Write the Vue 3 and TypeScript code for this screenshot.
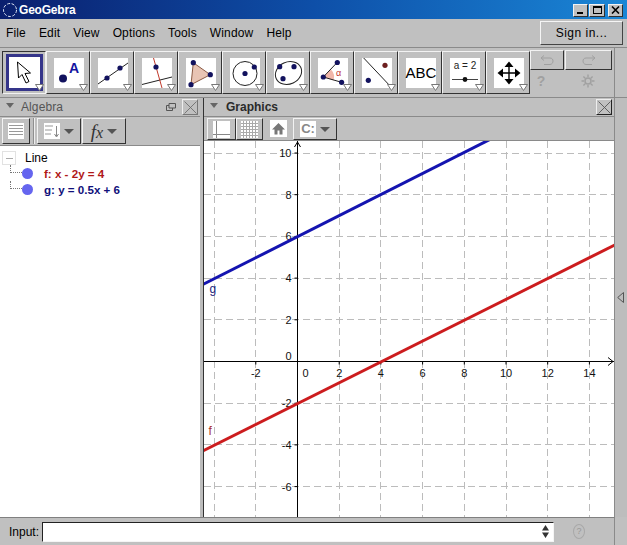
<script setup lang="ts">
// Menu and toolbar data
const menus = ['File', 'Edit', 'View', 'Options', 'Tools', 'Window', 'Help'];
const tools = ['move', 'point', 'line', 'perp', 'poly', 'circle', 'conic', 'angle', 'reflect', 'text', 'slider', 'pan'];

// Graphics view coordinate system
const W = 410;
const H = 376;
const originX = 93.5;
const originY = 220.5;
const unit = 20.85;
const sx = (x: number) => originX + x * unit;
const sy = (y: number) => originY - y * unit;

// Grid lines sit on whole pixels so the dashes stay crisp
const gridXs = [-4, -2, 2, 4, 6, 8, 10, 12, 14].map(v => Math.floor(sx(v)) + 0.5);
const gridYs = [10, 8, 6, 4, 2, -2, -4, -6].map(v => Math.floor(sy(v)) + 0.5);
const xLabels = [-2, 2, 4, 6, 8, 10, 12, 14];
const yLabels = [10, 8, 6, 4, 2, -2, -4, -6];
</script>

<template>
  <div class="window">
    <div class="titlebar">
      <svg class="app-icon" width="16" height="16" viewBox="0 0 16 16">
        <circle cx="8" cy="8" r="6.5" fill="none" stroke="#dfe6f5" stroke-width="1" stroke-dasharray="3 1.5" />
      </svg>
      <span class="title">GeoGebra</span>
      <div class="win-buttons">
        <button class="win-btn"><span class="min-bar"></span></button>
        <button class="win-btn max-btn"><span class="max-box"></span></button>
        <button class="win-btn close-btn">
          <svg width="9" height="8" viewBox="0 0 9 8"><path d="M1 0.5L8 7.5M8 0.5L1 7.5" stroke="#000" stroke-width="1.6" /></svg>
        </button>
      </div>
    </div>

    <div class="menubar">
      <span v-for="m in menus" :key="m" class="menu-item">{{ m }}</span>
      <button class="sign-in">Sign in...</button>
    </div>

    <div class="toolbar">
      <div class="tools">
        <div v-for="(t, i) in tools" :key="t" class="tool" :class="{ selected: i === 0 }">
          <div class="tool-face">
            <svg v-if="t === 'move'" width="30" height="30" viewBox="0 0 30 30">
              <path d="M8.5 4L9.5 20L13 16.5L17 25L20 23.5L16 15.5L21.5 15Z" fill="#fff" stroke="#000" stroke-width="1" />
            </svg>
            <svg v-else-if="t === 'point'" width="30" height="30" viewBox="0 0 30 30">
              <circle cx="9" cy="20.5" r="4" fill="#12125e" />
              <text x="15" y="14.5" class="tool-a">A</text>
            </svg>
            <svg v-else-if="t === 'line'" width="30" height="30" viewBox="0 0 30 30">
              <path d="M0 26L30 5" stroke="#222" stroke-width="1" />
              <circle cx="9" cy="20" r="2.6" fill="#12125e" />
              <circle cx="22" cy="10" r="2.6" fill="#12125e" />
            </svg>
            <svg v-else-if="t === 'perp'" width="30" height="30" viewBox="0 0 30 30">
              <path d="M0 26.5L30 19" stroke="#222" stroke-width="1" />
              <path d="M11.5 0L20 30" stroke="#c0392b" stroke-width="1" />
              <circle cx="14" cy="9" r="2.6" fill="#12125e" />
            </svg>
            <svg v-else-if="t === 'poly'" width="30" height="30" viewBox="0 0 30 30">
              <path d="M7.3 4.7L24.3 16.7L5 26.7Z" fill="#e8c4b4" stroke="#8a5a44" stroke-width="1" />
              <circle cx="7.3" cy="4.7" r="2.6" fill="#12125e" />
              <circle cx="24.3" cy="16.7" r="2.6" fill="#12125e" />
              <circle cx="5" cy="26.7" r="2.6" fill="#12125e" />
            </svg>
            <svg v-else-if="t === 'circle'" width="30" height="30" viewBox="0 0 30 30">
              <circle cx="15" cy="15.5" r="12" fill="none" stroke="#222" stroke-width="1" />
              <circle cx="15" cy="15.5" r="2.6" fill="#12125e" />
              <circle cx="24.3" cy="9" r="2.6" fill="#12125e" />
            </svg>
            <svg v-else-if="t === 'conic'" width="30" height="30" viewBox="0 0 30 30">
              <ellipse cx="14.5" cy="15" rx="13.5" ry="11" transform="rotate(-25 14.5 15)" fill="none" stroke="#222" stroke-width="1" />
              <circle cx="5.7" cy="8.7" r="2.6" fill="#12125e" />
              <circle cx="20" cy="8.7" r="2.6" fill="#12125e" />
              <circle cx="9" cy="20.7" r="2.6" fill="#12125e" />
            </svg>
            <svg v-else-if="t === 'angle'" width="30" height="30" viewBox="0 0 30 30">
              <path d="M5.3 19L13 11.5A11 11 0 0 1 15.5 22.5Z" fill="#f1b7a9" />
              <path d="M5.3 19L19.3 4.3M5.3 19L23.6 24.3" stroke="#222" stroke-width="1" />
              <circle cx="5.3" cy="19" r="2.6" fill="#12125e" />
              <circle cx="19.3" cy="4.5" r="2.6" fill="#12125e" />
              <circle cx="23.6" cy="24.3" r="2.6" fill="#12125e" />
              <text x="18" y="18" class="tool-alpha">α</text>
            </svg>
            <svg v-else-if="t === 'reflect'" width="30" height="30" viewBox="0 0 30 30">
              <path d="M1.7 0L30 30" stroke="#222" stroke-width="1" />
              <circle cx="23" cy="7.3" r="2.6" fill="#6d1f1f" />
              <circle cx="6.3" cy="22.3" r="2.6" fill="#12125e" />
            </svg>
            <span v-else-if="t === 'text'" class="tool-abc">ABC</span>
            <svg v-else-if="t === 'slider'" width="30" height="30" viewBox="0 0 30 30">
              <text x="15" y="11" class="tool-slider">a = 2</text>
              <path d="M2 21.5H28" stroke="#444" stroke-width="1" />
              <circle cx="15" cy="21.5" r="2.4" fill="#111" />
            </svg>
            <svg v-else width="30" height="30" viewBox="0 0 30 30">
              <path d="M15 8V22M8 15H22" stroke="#000" stroke-width="1.4" />
              <path d="M15 3.5L19.5 9H10.5ZM15 26.5L19.5 21H10.5ZM3.5 15L9 10.5V19.5ZM26.5 15L21 10.5V19.5Z" fill="#000" />
            </svg>
          </div>
          <svg class="tool-arrow" width="9" height="7" viewBox="0 0 9 7">
            <path d="M0.5 0.5H8.5L4.5 6.5Z" fill="#fff" stroke="#777" stroke-width="1" />
          </svg>
        </div>
      </div>
      <div class="undo-panel">
        <div class="undo-row">
          <button class="undo-btn">
            <svg width="14" height="11" viewBox="0 0 14 11"><path d="M4 0.5L1 3L4 5.5M1.5 3H10C12 3 13 4.5 13 6S12 9.5 10 9.5H4" fill="none" stroke="#a0a0a0" stroke-width="1" /></svg>
          </button>
          <button class="undo-btn wide">
            <svg width="14" height="11" viewBox="0 0 14 11"><path d="M10 0.5L13 3L10 5.5M12.5 3H4C2 3 1 4.5 1 6S2 9.5 4 9.5H10" fill="none" stroke="#a0a0a0" stroke-width="1" /></svg>
          </button>
        </div>
        <div class="help-row">
          <span class="help-q">?</span>
          <svg class="gear" width="14" height="14" viewBox="0 0 14 14">
            <circle cx="7" cy="7" r="3" fill="none" stroke="#a0a0a0" stroke-width="1.5" />
            <path d="M7 0.5V3M7 11V13.5M0.5 7H3M11 7H13.5M2.4 2.4L4.2 4.2M9.8 9.8L11.6 11.6M11.6 2.4L9.8 4.2M4.2 9.8L2.4 11.6" stroke="#a0a0a0" stroke-width="1.4" />
          </svg>
        </div>
      </div>
    </div>

    <div class="workspace">
      <div class="algebra">
        <div class="panel-title">
          <span class="collapse"></span>
          <span class="panel-name">Algebra</span>
          <svg class="undock" width="10" height="8" viewBox="0 0 10 8"><path d="M3 0.5H9.5V5H3ZM0.5 2.5H3M0.5 2.5V7.5H6.5V5" fill="none" stroke="#555" stroke-width="1" /></svg>
          <button class="panel-close">
            <svg width="13" height="13" viewBox="0 0 13 13"><path d="M0.5 0.5L12.5 12.5M12.5 0.5L0.5 12.5" stroke="#666" stroke-width="0.8" /></svg>
          </button>
        </div>
        <div class="panel-tools algebra-tools">
          <button class="style-btn sm">
            <span class="btn-icon lines"><i></i><i></i><i></i><i></i></span>
          </button>
          <span class="sep"></span>
          <button class="style-btn md">
            <span class="btn-icon sort">
              <svg width="16" height="16" viewBox="0 0 16 16"><path d="M1 3H9M1 7H8M1 11H7" stroke="#999" stroke-width="1" /><path d="M12.5 3V13M10.5 11L12.5 14L14.5 11" fill="none" stroke="#888" stroke-width="1" /></svg>
            </span>
            <span class="caret"></span>
          </button>
          <button class="style-btn md fx-btn">
            <span class="fx">f<span class="fx-x">x</span></span>
            <span class="caret"></span>
          </button>
        </div>
        <div class="tree">
          <div class="tree-head">
            <span class="minus-box"><span></span></span>
            <span class="tree-title">Line</span>
          </div>
          <div class="tree-row">
            <span class="connector"></span>
            <span class="dot"></span>
            <span class="eq red">f: x - 2y = 4</span>
          </div>
          <div class="tree-row">
            <span class="connector"></span>
            <span class="dot"></span>
            <span class="eq blue">g: y = 0.5x + 6</span>
          </div>
        </div>
      </div>

      <div class="divider"></div>

      <div class="graphics-panel">
        <div class="panel-title">
          <span class="collapse"></span>
          <span class="panel-name bold">Graphics</span>
          <button class="panel-close dark">
            <svg width="13" height="13" viewBox="0 0 13 13"><path d="M0.5 0.5L12.5 12.5M12.5 0.5L0.5 12.5" stroke="#555" stroke-width="0.9" /></svg>
          </button>
        </div>
        <div class="panel-tools graphics-tools">
          <button class="style-btn gsm">
            <svg width="17" height="17" viewBox="0 0 17 17"><rect width="17" height="17" fill="#fff" /><path d="M3.5 0V13.5H17M0 13.5H3.5M3.5 13.5V17" fill="none" stroke="#888" stroke-width="1" /></svg>
          </button>
          <button class="style-btn gsm narrow">
            <svg width="17" height="17" viewBox="0 0 17 17"><rect width="17" height="17" fill="#fff" /><path d="M2.5 0V17M5.5 0V17M8.5 0V17M11.5 0V17M14.5 0V17M0 2.5H17M0 5.5H17M0 8.5H17M0 11.5H17M0 14.5H17" stroke="#aaa" stroke-width="1" /></svg>
          </button>
          <span class="home-icon">
            <svg width="17" height="17" viewBox="0 0 17 17"><path d="M8.5 3L2 9.5H4.5V14.5H7.5V10.5H9.5V14.5H12.5V9.5H15Z" fill="#777" /></svg>
          </span>
          <button class="style-btn gmd">
            <span class="c-icon">C:</span>
            <span class="caret"></span>
          </button>
        </div>
        <div class="canvas">
          <svg :width="W" :height="H" :viewBox="`0 0 ${W} ${H}`">
            <g stroke="#bcbcbc" stroke-width="1" stroke-dasharray="7 4">
              <line v-for="x in gridXs" :key="'gx' + x" :x1="x" y1="0" :x2="x" :y2="H" />
              <line v-for="y in gridYs" :key="'gy' + y" x1="0" :y1="y" :x2="W" :y2="y" />
            </g>
            <line :x1="originX" y1="0" :x2="originX" :y2="H" stroke="#000" stroke-width="1" />
            <line x1="0" :y1="originY" :x2="W" :y2="originY" stroke="#000" stroke-width="1" />
            <path :d="`M${originX - 3} 6L${originX} 1L${originX + 3} 6`" fill="none" stroke="#000" stroke-width="1" />
            <path :d="`M${W - 6} ${originY - 4}L${W - 1} ${originY}L${W - 6} ${originY + 4}`" fill="none" stroke="#000" stroke-width="1" />
            <g v-for="x in xLabels" :key="'lx' + x">
              <line :x1="sx(x)" :y1="originY" :x2="sx(x)" :y2="originY + 3" stroke="#000" />
              <text :x="sx(x)" :y="originY + 15" text-anchor="middle" class="axis-label">{{ x }}</text>
            </g>
            <g v-for="y in yLabels" :key="'ly' + y">
              <line :x1="originX - 3" :y1="sy(y)" :x2="originX" :y2="sy(y)" stroke="#000" />
              <text :x="originX - 6" :y="sy(y) + 4" text-anchor="end" class="axis-label">{{ y }}</text>
            </g>
            <text :x="originX - 6" :y="originY - 2" text-anchor="end" class="axis-label">0</text>
            <text :x="originX + 5" :y="originY + 15" class="axis-label">0</text>
            <line :x1="sx(-5)" :y1="sy(-4.52)" :x2="sx(16)" :y2="sy(5.98)" stroke="#cc1c1e" stroke-width="3" />
            <line :x1="sx(-5)" :y1="sy(3.46)" :x2="sx(10)" :y2="sy(11.04)" stroke="#1414b0" stroke-width="3" />
            <text x="5.5" y="152" class="line-label g">g</text>
            <text x="4.5" y="294" class="line-label f">f</text>
          </svg>
        </div>
      </div>
      <div class="side-strip">
        <svg class="side-arrow" width="7" height="11" viewBox="0 0 7 11"><path d="M6.5 0.5V10.5L0.7 5.5Z" fill="none" stroke="#555" stroke-width="1" /></svg>
      </div>
    </div>

    <div class="inputbar">
      <span class="input-label">Input:</span>
      <div class="input-box">
        <svg width="7" height="13" viewBox="0 0 7 13"><path d="M3.5 0L7 5.5H0ZM3.5 13L0 7.5H7Z" fill="#333" /></svg>
      </div>
      <span class="input-help">?</span>
    </div>
  </div>
</template>

<style>
html, body {
  margin: 0;
  padding: 0;
  background: #c0c0c0;
}
</style>

<style scoped>
.window {
  width: 627px;
  height: 545px;
  display: flex;
  flex-direction: column;
  overflow: hidden;
  background: #c0c0c0;
  font-family: "Liberation Sans", Arial, sans-serif;
  font-size: 12px;
  color: #000;
}

button {
  padding: 0;
  font-family: inherit;
  color: inherit;
  background: #c0c0c0;
  border: 0;
}

.titlebar {
  height: 19px;
  flex: none;
  display: flex;
  align-items: center;
  padding: 0 4px 0 2px;
  background: linear-gradient(90deg, #0a1f6e 0%, #0e4fa8 50%, #1a86d6 100%);
  color: #fff;
}
.app-icon { margin-right: 1px; }
.title { font-weight: 700; font-size: 12px; letter-spacing: -0.2px; }
.win-buttons { margin-left: auto; display: flex; margin-top: 1px; }
.win-btn {
  width: 15px;
  height: 13px;
  box-sizing: border-box;
  display: flex;
  align-items: center;
  justify-content: center;
  border: 1px solid;
  border-color: #f2f2f2 #303030 #303030 #f2f2f2;
}
.max-btn { width: 16px; margin-left: 1px; }
.close-btn { margin-left: 3px; }
.min-bar { width: 6px; height: 2px; background: #000; margin-top: 6px; margin-right: 2px; }
.max-box { width: 9px; height: 8px; border: 1px solid #000; border-top-width: 2px; box-sizing: border-box; }

.menubar {
  height: 29px;
  flex: none;
  display: flex;
  align-items: center;
  padding-left: 6px;
  gap: 13px;
  box-sizing: border-box;
  border-bottom: 1px solid #8a8a8a;
  font-size: 12px;
  letter-spacing: 0.15px;
}
.sign-in {
  margin-left: auto;
  width: 83px;
  height: 24px;
  margin-right: 4px;
  font-size: 12px;
  letter-spacing: 0.5px;
  box-sizing: border-box;
  border: 1px solid;
  border-color: #f5f5f5 #444 #444 #f5f5f5;
}

.toolbar {
  height: 50px;
  flex: none;
  display: flex;
  padding-left: 2px;
  padding-top: 3px;
  box-sizing: border-box;
  border-bottom: 1px solid #8a8a8a;
}
.tools { display: flex; height: 43px; }
.tool {
  width: 44px;
  height: 43px;
  box-sizing: border-box;
  position: relative;
  display: flex;
  align-items: center;
  justify-content: center;
  border: 1px solid;
  border-color: #f2f2f2 #333 #333 #f2f2f2;
}
.tool-face {
  width: 30px;
  height: 30px;
  margin-left: 2px;
  background: #fff;
  display: flex;
  align-items: center;
  justify-content: center;
}
.tool.selected { border-color: #333 #f2f2f2 #f2f2f2 #333; }
.tool.selected .tool-face {
  width: 37px;
  height: 37px;
  margin-left: 0;
  border: 3px solid #35358a;
  box-sizing: border-box;
}
.tool-arrow {
  position: absolute;
  right: 1px;
  bottom: 2px;
}
.tool-a { font-size: 14px; font-weight: 700; fill: #1414a0; font-family: "Liberation Sans", sans-serif; }
.tool-alpha { font-size: 9px; fill: #c03030; font-family: "Liberation Sans", sans-serif; }
.tool-abc { font-size: 15px; color: #000; }
.tool-slider { font-size: 10px; fill: #222; text-anchor: middle; font-family: "Liberation Sans", sans-serif; }

.undo-panel {
  width: 85px;
  box-sizing: border-box;
  display: flex;
  flex-direction: column;
  margin-top: -3px;
  border-right: 1px solid #8a8a8a;
}
.undo-row { display: flex; height: 20px; margin-top: 2px; flex: none; }
.undo-btn {
  width: 34px;
  height: 20px;
  box-sizing: border-box;
  border: 1px solid;
  border-color: #f2f2f2 #333 #333 #f2f2f2;
  display: flex;
  align-items: center;
  justify-content: center;
}
.undo-btn.wide { width: 47px; margin-left: 1px; }
.help-row { display: flex; align-items: center; padding-top: 3px; color: #a0a0a0; }
.help-q { width: 22px; text-align: center; font-weight: 700; font-size: 14px; }
.gear { margin-left: 29px; }

.workspace { flex: 1; min-height: 0; display: flex; }
.algebra { width: 200px; flex: none; display: flex; flex-direction: column; background: #fff; }
.divider { width: 4px; flex: none; background: #bcbcbc; border-right: 1px solid #333; box-sizing: border-box; }
.graphics-panel { width: 410px; flex: none; display: flex; flex-direction: column; }
.side-strip { flex: 1; position: relative; border-left: 1px solid #8a8a8a; background: #bdbdbd; }
.side-arrow {
  position: absolute;
  top: 194px;
  left: 2px;
}

.panel-title {
  height: 19px;
  flex: none;
  display: flex;
  align-items: center;
  background: #c0c0c0;
  padding-left: 6px;
  box-sizing: border-box;
  border-bottom: 1px solid #8a8a8a;
}
.collapse {
  width: 0;
  height: 0;
  border-left: 4px solid transparent;
  border-right: 4px solid transparent;
  border-top: 5px solid #666;
  margin-right: 7px;
  margin-top: -3px;
}
.panel-name { font-size: 12px; color: #555; letter-spacing: 0.1px; }
.panel-name.bold { color: #2a2a2a; font-weight: 700; font-size: 12px; letter-spacing: 0; margin-left: 1px; }
.undock { margin-left: auto; margin-right: 6px; }
.panel-close {
  width: 16px;
  height: 16px;
  margin-right: 2px;
  box-sizing: border-box;
  display: flex;
  align-items: center;
  justify-content: center;
  border: 1px solid;
  border-color: #eee #777 #777 #eee;
}
.panel-close.dark { margin-left: auto; border-color: #eee #222 #222 #eee; }

.panel-tools {
  flex: none;
  display: flex;
  align-items: flex-start;
  padding-top: 1px;
  background: #c0c0c0;
  box-sizing: border-box;
  border-bottom: 1px solid #8a8a8a;
}
.algebra-tools { height: 29px; padding-left: 2px; }
.graphics-tools { height: 24px; padding-left: 3px; }
.style-btn {
  display: flex;
  align-items: center;
  justify-content: center;
  gap: 4px;
  box-sizing: border-box;
  border: 1px solid;
  border-color: #f2f2f2 #333 #333 #f2f2f2;
}
.algebra-tools .style-btn { height: 26px; }
.graphics-tools .style-btn { height: 22px; }
.style-btn.sm { width: 28px; }
.style-btn.md { width: 44px; margin-right: 1px; }
.style-btn.gsm { width: 29px; }
.style-btn.gsm.narrow { width: 27px; }
.style-btn.gmd { width: 44px; }
.sep { width: 2px; height: 26px; margin: 0 2px 0 3px; background: #8f8f8f; border-right: 1px solid #eee; box-sizing: border-box; }
.btn-icon { width: 16px; height: 16px; background: #fff; display: block; }
.btn-icon.lines { display: flex; flex-direction: column; gap: 2px; padding: 2px 1px; box-sizing: border-box; }
.btn-icon.lines i { height: 1px; background: #999; display: block; }
.caret {
  width: 0;
  height: 0;
  border-left: 5px solid transparent;
  border-right: 5px solid transparent;
  border-top: 5px solid #555;
}
.fx { font-family: "Liberation Serif", serif; font-style: italic; font-size: 19px; color: #333; line-height: 1; }
.fx-x { font-size: 16px; }
.home-icon { width: 17px; height: 17px; background: #fff; margin: 2px 6px 0 7px; display: block; }
.home-icon svg { display: block; }
.c-icon { width: 16px; height: 16px; background: #fff; color: #888; font-weight: 700; font-size: 13px; line-height: 16px; text-align: center; display: block; }
.canvas { flex: 1; min-height: 0; background: #fff; overflow: hidden; }
.canvas svg { display: block; }
.axis-label { font-size: 11px; fill: #111; font-family: "Liberation Sans", sans-serif; }
.line-label { font-size: 12px; font-family: "Liberation Sans", sans-serif; }
.line-label.g { fill: #22227a; }
.line-label.f { fill: #a83030; }

.tree { flex: 1; padding-top: 5px; }
.tree-head { display: flex; align-items: center; height: 14px; padding-left: 2px; }
.minus-box {
  width: 14px;
  height: 14px;
  border: 1px solid #e2e2e2;
  box-sizing: border-box;
  display: flex;
  align-items: center;
  justify-content: center;
  margin-right: 9px;
}
.minus-box span { width: 7px; height: 1px; background: #aaa; }
.tree-title { font-size: 12px; }
.tree-row { height: 16px; display: flex; align-items: center; padding-left: 10px; }
.connector { width: 12px; height: 8px; margin-top: -8px; border-left: 1px dotted #777; border-bottom: 1px dotted #777; box-sizing: border-box; }
.dot { width: 11px; height: 11px; border-radius: 50%; background: #6565ef; margin-right: 11px; }
.eq { font-weight: 700; font-size: 11.6px; }
.eq.red { color: #b01818; }
.eq.blue { color: #10107a; }

.inputbar {
  height: 28px;
  width: 615px;
  flex: none;
  display: flex;
  align-items: center;
  padding-left: 9px;
  box-sizing: border-box;
  border-top: 1px solid #808080;
  border-right: 1px solid #8a8a8a;
}
.input-label { font-size: 12px; width: 33px; }
.input-box {
  width: 512px;
  height: 20px;
  box-sizing: border-box;
  border: 1px solid;
  border-color: #222 #f5f5f5 #f5f5f5 #222;
  background: #fff;
  display: flex;
  align-items: center;
  justify-content: flex-end;
  padding-right: 4px;
}
.input-help {
  margin-left: 19px;
  width: 10px;
  height: 13px;
  border: 1px solid #a8a8a8;
  border-radius: 50%;
  color: #999;
  font-size: 9px;
  text-align: center;
  line-height: 13px;
}
</style>
